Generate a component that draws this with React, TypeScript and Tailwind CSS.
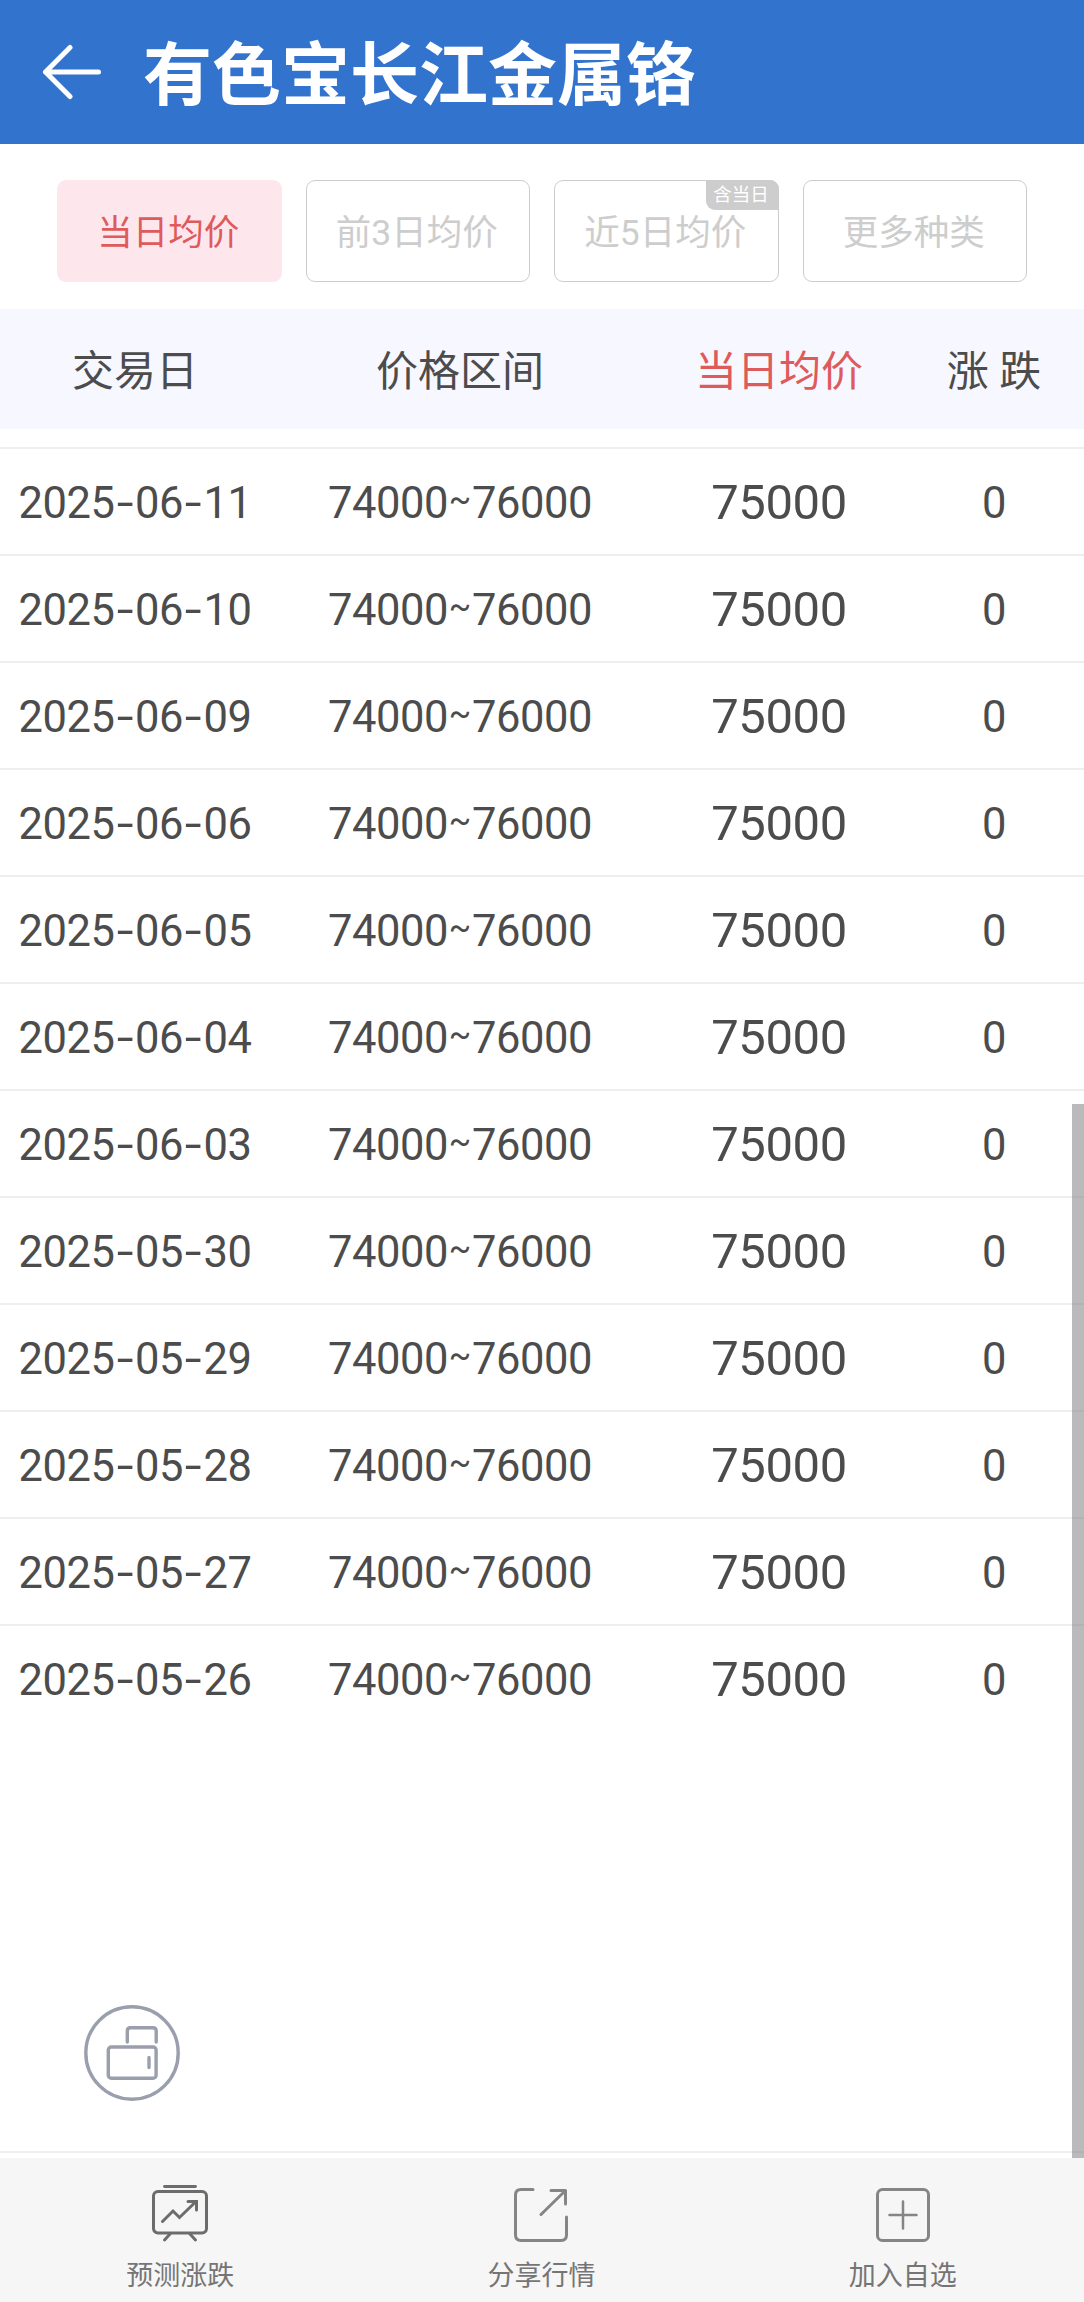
import React from "react";

const dates = [
  "2025-06-11", "2025-06-10", "2025-06-09", "2025-06-06", "2025-06-05", "2025-06-04",
  "2025-06-03", "2025-05-30", "2025-05-29", "2025-05-28", "2025-05-27", "2025-05-26",
];

const columns = "grid grid-cols-[270px_380px_258px_172px]";

// Figures set in even cells, with narrower cells for dashes.
function Figures({ text }: { text: string }) {
  return (
    <span className="inline-flex items-center pt-1">
      {text.split("").map((c, i) => (
        <span
          key={i}
          className={
            c === "-"
              ? "w-[20.500px] scale-x-140 text-center"
              : c === "~"
                ? "w-6 pb-2 text-center text-[33px]"
                : "w-6 text-center"
          }
        >
          {c}
        </span>
      ))}
    </span>
  );
}

function Tab({ label, active, badge }: { label: string; active?: boolean; badge?: string }) {
  return (
    <button
      className={
        active
          ? "relative flex h-[102px] items-center justify-center rounded-[9px] bg-[#fde7ed] text-[35.5px] text-[#de5b5b]"
          : "relative flex h-[102px] items-center justify-center rounded-[9px] border border-[#cdcdcd] text-[35.5px] text-[#cdcdcd]"
      }
    >
      <span className="pt-[5px] pr-[2px] whitespace-nowrap">{label}</span>
      {badge && (
        <span className="absolute -top-px -right-px flex h-[30px] w-[73px] items-center justify-center rounded-tr-[9px] rounded-bl-[9px] bg-[#cdcdcd] pt-[2px] pr-[2px] text-[18.5px] text-white">
          {badge}
        </span>
      )}
    </button>
  );
}

function NavItem({ label, children }: { label: string; children: React.ReactNode }) {
  return (
    <button className="flex flex-col items-center pt-[25px] text-[27px] leading-[40px] text-[#757575]">
      <svg className="-ml-px" width="60" height="60" viewBox="0 0 60 60" fill="none" strokeLinecap="round" strokeLinejoin="round">
        {children}
      </svg>
      <span className="mt-[13px] -ml-px">{label}</span>
    </button>
  );
}

export default function App() {
  return (
    <div className="relative flex h-[2302px] w-[1084px] flex-col overflow-hidden bg-white font-['Roboto','Noto_Sans_CJK_SC',sans-serif] text-[#4c4c4c]">
      <header className="flex h-36 shrink-0 items-center bg-[#3273ce] pl-[42px] text-white">
        <svg width="60" height="60" viewBox="0 0 60 60" fill="none" stroke="currentColor" strokeWidth="5" strokeLinecap="round" strokeLinejoin="round">
          <path d="M28 5.500 3.500 30 28 54.500M3.500 30H56.500" />
        </svg>
        <h1 className="ml-[41px] pt-[9px] text-[69px] leading-[135px] font-bold">有色宝长江金属铬</h1>
      </header>

      <nav className="grid h-[165px] shrink-0 grid-cols-4 gap-x-6 pt-9 pr-[57px] pl-[57px]">
        <Tab label="当日均价" active />
        <Tab label="前3日均价" />
        <Tab label="近5日均价" badge="含当日" />
        <Tab label="更多种类" />
      </nav>

      <div className={`${columns} h-[120px] shrink-0 items-center bg-[#f7f7ff] pt-1 text-center text-[42px]`}>
        <div>交易日</div>
        <div>价格区间</div>
        <div className="text-[#de5b5b]">当日均价</div>
        <div>涨 跌</div>
      </div>

      <main className="mt-[18px] grow border-t-2 border-[#eeeeee]">
        {dates.map((date, i) => (
          <div
            key={date}
            className={`${columns} h-[107px] items-center border-b-2 text-center text-[43.5px] ${i === 11 ? "border-transparent" : "border-[#eeeef0]"}`}
          >
            <div><Figures text={date} /></div>
            <div><Figures text="74000~76000" /></div>
            <div className="pt-[3px] text-[49px] tracking-[-0.4px]">75000</div>
            <div><Figures text="0" /></div>
          </div>
        ))}
      </main>

      <footer className="flex h-[151px] shrink-0 flex-col border-t-2 border-[#eeeeee]">
        <div className="mt-[5px] grid grow grid-cols-3 bg-[#f6f6f6]">
          <NavItem label="预测涨跌">
            <g stroke="#6c6c6a" strokeWidth="3">
              <path d="M14.500 3.500H45.500" strokeWidth="2.800" />
              <rect x="3.500" y="8.500" width="53" height="41.500" rx="4.500" />
              <path d="M12.500 38.500 23 28 29.500 34.500 46 18.500M38 18.500H46.500V27" strokeLinejoin="miter" />
              <path d="M20 51 14.500 57M40 51 45.500 57" />
            </g>
          </NavItem>
          <NavItem label="分享行情">
            <g stroke="#858587" strokeWidth="3">
              <path d="M22 6.500H10Q4.500 6.500 4.500 12V52Q4.500 57.500 10 57.500H50Q55.500 57.500 55.500 52V34" />
              <path d="M30 31.500 54 8M40 7.500H54.500V21" />
            </g>
          </NavItem>
          <NavItem label="加入自选">
            <g stroke="#858587" strokeWidth="3">
              <rect x="4.500" y="6.500" width="51" height="51" rx="5" />
              <path d="M30 18.500V45.500M16.500 32H43.500" strokeWidth="2.500" />
            </g>
          </NavItem>
        </div>
      </footer>

      <button className="absolute top-[2005px] left-[84px]" aria-label="print">
        <svg width="96" height="96" viewBox="0 0 96 96" fill="none" stroke="#9a9fae" strokeWidth="3.400" strokeLinecap="round" strokeLinejoin="round">
          <circle cx="48" cy="48" r="46.200" />
          <rect x="24.300" y="42" width="47.800" height="31.300" rx="3" />
          <path d="M43.300 37V26Q43.300 22.800 46.500 22.800H69Q72.200 22.800 72.200 26V37M65 52.500V62.500" />
        </svg>
      </button>
      <div className="absolute top-[1104px] right-0 h-[1054px] w-3 bg-[#767377]/50" />
    </div>
  );
}
